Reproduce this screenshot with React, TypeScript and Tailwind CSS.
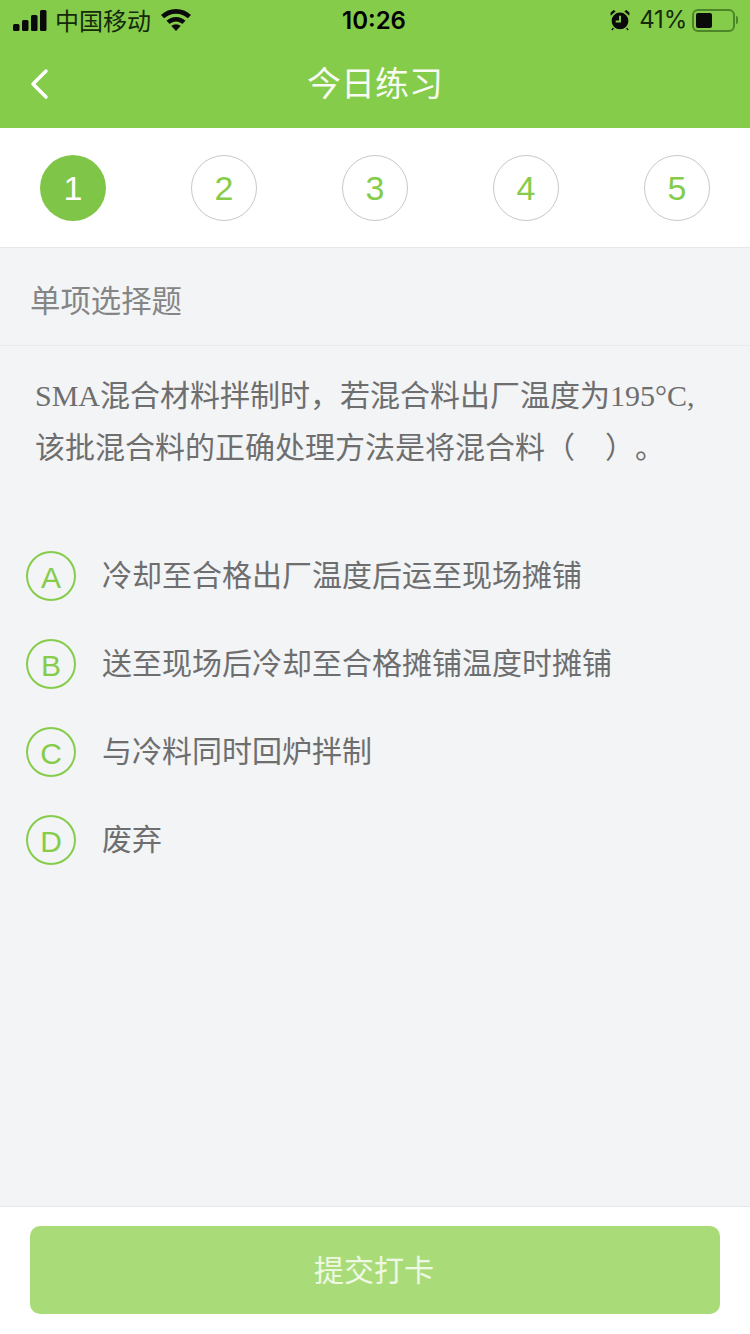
const cjk = "font-['Noto_Sans_CJK_SC','Liberation_Sans',sans-serif]";

const steps = [1, 2, 3, 4, 5];

const options = [
  { key: "A", text: "冷却至合格出厂温度后运至现场摊铺" },
  { key: "B", text: "送至现场后冷却至合格摊铺温度时摊铺" },
  { key: "C", text: "与冷料同时回炉拌制" },
  { key: "D", text: "废弃" },
];

function StatusBar() {
  return (
    <div className="relative flex h-10 items-center justify-between pl-[13px] pr-[12px] text-black">
      <div className="flex items-center">
        <svg width="34" height="21" viewBox="0 0 34 21" fill="#0a0a0a">
          <rect x="0" y="14" width="6.500" height="7" rx="1.500" />
          <rect x="9" y="10" width="6.500" height="11" rx="1.500" />
          <rect x="18" y="5" width="6.500" height="16" rx="1.500" />
          <rect x="27" y="0" width="6.500" height="21" rx="1.500" />
        </svg>
        <span className="ml-[8px] font-['Noto_Sans_CJK_SC',sans-serif] text-[24px] leading-none text-[#142a0a]">中国移动</span>
        <svg className="ml-[10px]" width="30" height="22" viewBox="0 0 30 22" fill="#0a0a0a">
          <path d="M15 0C9.200 0 4 2.300 0 6l3.200 3.300C6.300 6.500 10.400 4.700 15 4.700s8.700 1.800 11.800 4.600L30 6C26 2.300 20.800 0 15 0z" />
          <path d="M15 8C11.300 8 8 9.400 5.500 11.700l3.200 3.300c1.700-1.500 3.900-2.400 6.300-2.400s4.600.9 6.300 2.400l3.200-3.300C22 9.400 18.700 8 15 8z" />
          <path d="M15 15.200c-1.800 0-3.400.7-4.600 1.800L15 22l4.600-5c-1.200-1.100-2.800-1.800-4.600-1.800z" />
        </svg>
      </div>
      <span className="absolute left-[342px] top-[6px] font-['Inter',sans-serif] text-[24px] font-semibold leading-[30px]">10:26</span>
      <div className="flex items-center">
        <svg width="20" height="22" viewBox="0 0 21 22" fill="#0a0a0a">
          <circle cx="10.500" cy="12" r="8.800" />
          <path d="M.8 6.500 6 1.800 3.800.5 .5 3.500zM20.200 6.500 15 1.800 17.200.5 20.500 3.500z" />
          <path d="M3.500 19.500 2 21.500M17.500 19.500 19 21.500" stroke="#0a0a0a" strokeWidth="1.500" />
          <path d="M10.500 6.500V12.500H6" fill="none" stroke="#86cc4b" strokeWidth="2" />
        </svg>
        <span className="ml-[9px] font-['Inter',sans-serif] text-[24px] leading-none tracking-[-0.2px] text-[#142a0a]">41%</span>
        <div className="ml-[5px] flex items-center">
          <div className="flex h-[23px] w-[43px] items-center rounded-[6px] border-2 border-[#4d8529] p-[2px]">
            <div className="h-[15px] w-[16px] rounded-[2px] bg-[#0a0a0a]" />
          </div>
          <div className="ml-[1px] h-[8px] w-[2px] rounded-r-sm bg-[#4d8529]" />
        </div>
      </div>
    </div>
  );
}

export default function App() {
  return (
    <div className={`flex h-[1334px] w-[750px] flex-col overflow-hidden bg-[#f2f4f6] ${cjk}`}>
      <header className="h-[128px] shrink-0 bg-[#86cc4b]">
        <StatusBar />
        <div className="relative flex h-[88px] items-center justify-center pb-[4px]">
          <svg className="absolute left-[28px] top-[28px]" width="22" height="32" viewBox="0 0 22 32" fill="none">
            <path d="M18 3 5 16l13 13" stroke="#fff" strokeWidth="3.500" strokeLinecap="round" strokeLinejoin="round" />
          </svg>
          <h1 className="text-[34px] font-normal leading-none text-white/95">今日练习</h1>
        </div>
      </header>

      <div className="flex h-[120px] shrink-0 items-center justify-between border-b border-[#e8e8e8] bg-white px-[40px] pt-[1px]">
        {steps.map((n) =>
          n === 1 ? (
            <div key={n} className="flex h-[66px] w-[66px] items-center justify-center rounded-full bg-[#7fc548] font-['Liberation_Sans',sans-serif] text-[34px] text-white">
              {n}
            </div>
          ) : (
            <div key={n} className="flex h-[66px] w-[66px] items-center justify-center rounded-full border border-[#c8c8c8] font-['Liberation_Sans',sans-serif] text-[34px] text-[#86cc4b]">
              {n}
            </div>
          ),
        )}
      </div>

      <div className="flex h-[98px] shrink-0 items-center border-b border-[#e9ebec] pl-[30px] pt-[6px] text-[30.4px] leading-none text-[#858585]">
        单项选择题
      </div>

      <main className="flex-1">
        <p className="pl-[35px] pt-[24px] font-['Liberation_Serif','Noto_Sans_CJK_SC',serif] text-[30px] leading-[52px] text-[#6e6e6e]">
          SMA混合材料拌制时，若混合料出厂温度为195°C,
          <br />
          该批混合料的正确处理方法是将混合料（ &nbsp; &nbsp;）<span className="ml-[15px]">。</span>
        </p>
        <ul className="mt-[77px] flex flex-col gap-[38px] pl-[26px]">
          {options.map((o) => (
            <li key={o.key} className="flex h-[50px] items-center">
              <span className="flex h-[50px] w-[50px] shrink-0 items-center justify-center rounded-full border-2 border-[#86cc4b] pt-[2px] font-['Liberation_Sans',sans-serif] text-[30px] text-[#86cc4b]">
                {o.key}
              </span>
              <span className="ml-[26px] pb-[6px] text-[30px] leading-none text-[#6e6e6e]">{o.text}</span>
            </li>
          ))}
        </ul>
      </main>

      <footer className="flex h-[128px] shrink-0 justify-center border-t border-[#e8e8e8] bg-white pt-[19px]">
        <button className="h-[88px] w-[690px] rounded-[10px] bg-[#a9dc78] pb-[4px] pr-[2px] text-[30px] text-white/80">提交打卡</button>
      </footer>
    </div>
  );
}
